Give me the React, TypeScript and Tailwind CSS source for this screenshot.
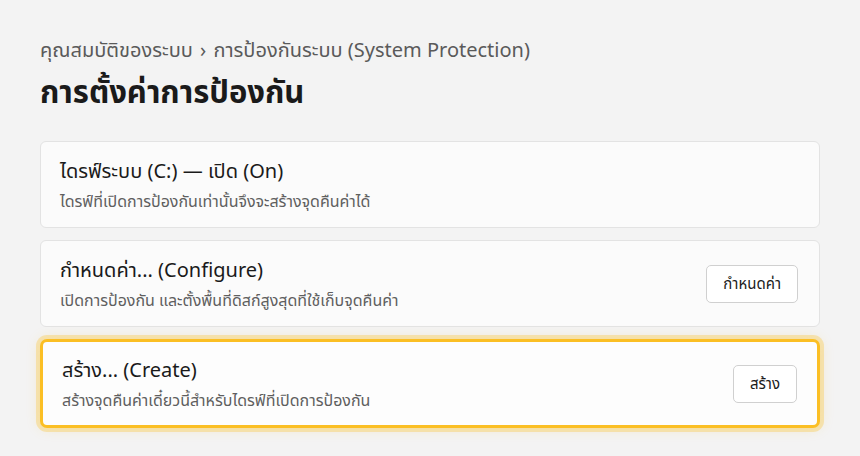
import React from "react";

interface Row {
  title: string;
  desc: string;
  action?: string;
  focused?: boolean;
}

const rows: Row[] = [
  {
    title: "ไดรฟ์ระบบ (C:) — เปิด (On)",
    desc: "ไดรฟ์ที่เปิดการป้องกันเท่านั้นจึงจะสร้างจุดคืนค่าได้",
  },
  {
    title: "กำหนดค่า... (Configure)",
    desc: "เปิดการป้องกัน และตั้งพื้นที่ดิสก์สูงสุดที่ใช้เก็บจุดคืนค่า",
    action: "กำหนดค่า",
  },
  {
    title: "สร้าง... (Create)",
    desc: "สร้างจุดคืนค่าเดี๋ยวนี้สำหรับไดรฟ์ที่เปิดการป้องกัน",
    action: "สร้าง",
    focused: true,
  },
];

export default function App() {
  return (
    <div
      className="w-[860px] h-[456px] bg-[#f3f3f3] px-[40px] pt-[35px] overflow-hidden"
      style={{ fontFamily: '"Noto Sans", "Noto Sans Thai", "Open Sans", sans-serif' }}
    >
      <div className="text-[20px] leading-[30px] text-[#5a5a5a]">
        คุณสมบัติของระบบ <span className="mx-[2px]">›</span> การป้องกันระบบ (System Protection)
      </div>
      <h1 className="mt-[4px] text-[31px] leading-[44px] font-bold text-[#1a1a1a]">
        การตั้งค่าการป้องกัน
      </h1>
      <div className="mt-[28px] flex flex-col gap-[12px]">
        {rows.map((r) => (
          <div
            key={r.title}
            className={
              r.focused
                ? "flex items-center justify-between rounded-[7px] bg-[#fdfdfd] border-[3px] border-[#fbbf24] shadow-[0_0_0_4px_rgba(251,191,36,0.3),0_0_14px_rgba(251,191,36,0.22)] pl-[19px] pr-[20px] h-[89px]"
                : "flex items-center justify-between rounded-[6px] bg-[#fbfbfb] border border-[#e3e3e3] pl-[19px] pr-[21px] h-[87px]"
            }
          >
            <div className="flex flex-col">
              <div className="text-[20px] leading-[28px] text-[#1a1a1a]">{r.title}</div>
              <div className="mt-[5px] text-[16px] leading-[22px] text-[#5f5f5f]">{r.desc}</div>
            </div>
            {r.action && (
              <button className="h-[38px] px-[16px] rounded-[5px] border border-[#d0d0d0] bg-white text-[15px] text-[#1a1a1a]">
                {r.action}
              </button>
            )}
          </div>
        ))}
      </div>
    </div>
  );
}
